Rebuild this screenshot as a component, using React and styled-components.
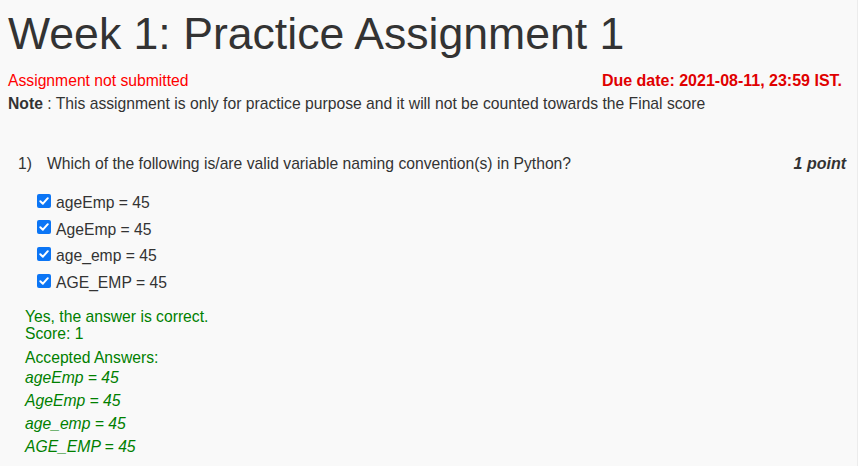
import React from 'react';
import styled, { createGlobalStyle } from 'styled-components';

const GlobalStyle = createGlobalStyle`
    html, body {
        margin: 0;
        padding: 0;
        background: #ffffff;
    }
    body {
        font-family: "Liberation Sans", Arial, sans-serif;
        color: #333333;
    }
`;

const Page = styled.main`
    width: 858px;
    min-height: 466px;
    background: #f9f9f9;
    border-right: 1px solid #ececec;
    padding: 0 8px;
    box-sizing: border-box;
`;

const Title = styled.h1`
    margin: 0;
    padding-top: 8px;
    font-size: 44.6px;
    font-weight: 400;
    line-height: 52px;
    color: #333333;
`;

const StatusRow = styled.div`
    display: flex;
    justify-content: space-between;
    align-items: baseline;
    margin-top: 10px;
    padding-right: 7px;
    font-size: 15.7px;
    line-height: 22px;
`;

const Status = styled.span`
    color: ${(p) => (p.$bold ? '#e00000' : '#ff0000')};
    font-weight: ${(p) => (p.$bold ? 700 : 400)};
    font-size: ${(p) => (p.$bold ? '16px' : 'inherit')};
`;

const Note = styled.div`
    margin-top: 1px;
    font-size: 15.7px;
    line-height: 22px;
    color: #333333;

    b {
        font-weight: 700;
    }
`;

const Question = styled.section`
    margin-top: 38px;
    padding-left: 10px;
`;

const QuestionHead = styled.div`
    display: flex;
    align-items: baseline;
    font-size: 15.7px;
    line-height: 22px;
`;

const QNum = styled.span`
    width: 29px;
    flex: none;
`;

const QText = styled.span`
    flex: 1;
`;

const Points = styled.span`
    font-size: 16px;
    font-weight: 700;
    font-style: italic;
    padding-right: 3px;
`;

const Options = styled.div`
    display: flex;
    flex-direction: column;
    gap: 4.7px;
    margin-top: 17px;
    padding-left: 19px;
`;

const Option = styled.label`
    display: flex;
    align-items: center;
    gap: 5px;
    font-size: 15.7px;
    line-height: 22px;
    color: #333333;
`;

const Box = styled.span`
    width: 14px;
    height: 14px;
    border-radius: 2px;
    background: #0b75f5;
    display: flex;
    align-items: center;
    justify-content: center;
    margin-top: -5px;
`;

const Feedback = styled.div`
    margin-top: 14px;
    padding-left: 7px;
    color: #008000;
    font-size: 15.7px;
`;

const FeedLine = styled.div`
    line-height: 17px;
`;

const AcceptedTitle = styled.div`
    margin-top: 7px;
    line-height: 17px;
`;

const Answer = styled.div`
    font-style: italic;
    line-height: 23px;
`;

const options = ['ageEmp = 45', 'AgeEmp = 45', 'age_emp = 45', 'AGE_EMP = 45'];

const Check = () => (
    <Box>
        <svg width="12" height="12" viewBox="0 0 12 12">
            <path d="M2.3 6.2 L4.9 8.7 L9.8 3.2" fill="none" stroke="#fff" strokeWidth="2" strokeLinecap="round" strokeLinejoin="round" />
        </svg>
    </Box>
);

const App = () => (
    <>
        <GlobalStyle />
        <Page>
            <Title>Week 1: Practice Assignment 1</Title>
            <StatusRow>
                <Status>Assignment not submitted</Status>
                <Status $bold>Due date: 2021-08-11, 23:59 IST.</Status>
            </StatusRow>
            <Note>
                <b>Note</b> : This assignment is only for practice purpose and it will not be counted towards the Final score
            </Note>
            <Question>
                <QuestionHead>
                    <QNum>1)</QNum>
                    <QText>Which of the following is/are valid variable naming convention(s) in Python?</QText>
                    <Points>1 point</Points>
                </QuestionHead>
                <Options>
                    {options.map((o) => (
                        <Option key={o}>
                            <Check />
                            {o}
                        </Option>
                    ))}
                </Options>
                <Feedback>
                    <FeedLine>Yes, the answer is correct.</FeedLine>
                    <FeedLine>Score: 1</FeedLine>
                    <AcceptedTitle>Accepted Answers:</AcceptedTitle>
                    {options.map((o) => (
                        <Answer key={o}>{o}</Answer>
                    ))}
                </Feedback>
            </Question>
        </Page>
    </>
);

export default App;
